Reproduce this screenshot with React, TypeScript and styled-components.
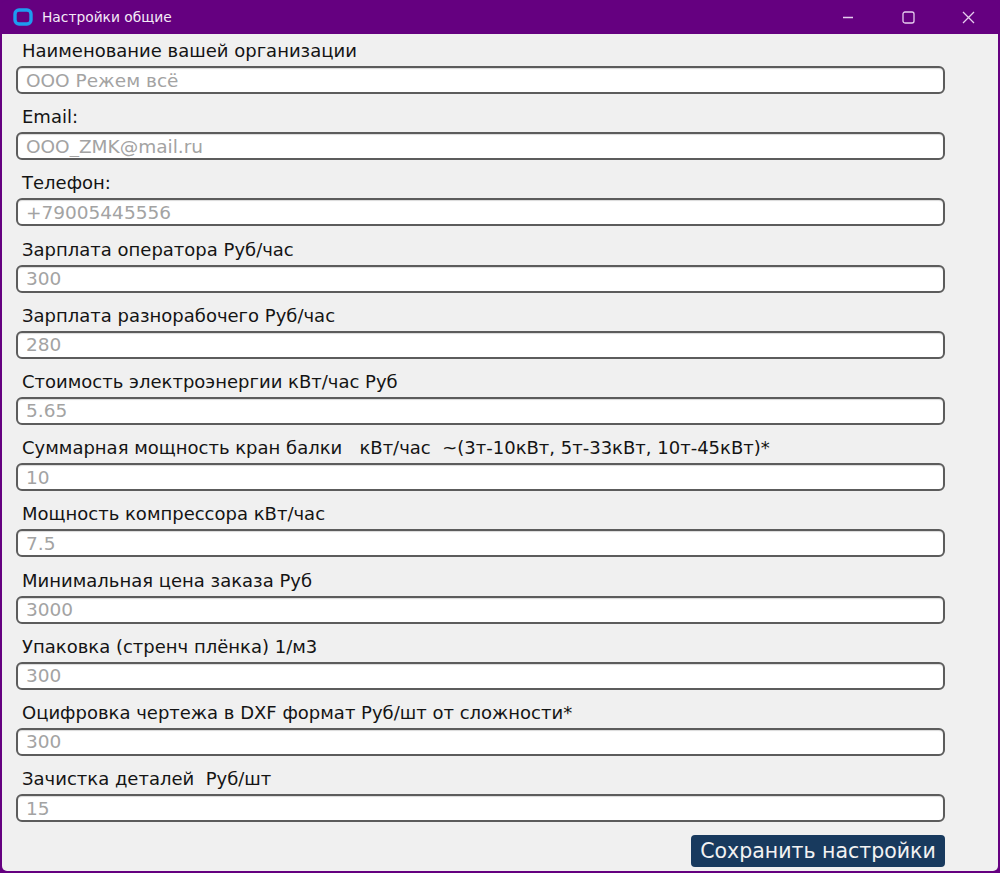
import styled, { createGlobalStyle } from 'styled-components';

const GlobalStyle = createGlobalStyle`
  html, body {
    margin: 0;
    padding: 0;
    background: #650080;
  }
  * {
    box-sizing: border-box;
  }
`;

const Window = styled.div`
  width: 1000px;
  height: 873px;
  display: flex;
  flex-direction: column;
  background: #650080;
  padding: 0 2px 2px 2px;
  border-radius: 8px 8px 6px 6px;
  overflow: hidden;
`;

const TitleBar = styled.div`
  height: 34px;
  flex: none;
  display: flex;
  align-items: center;
  padding-left: 11px;
  color: #f4eaf7;
  font-family: 'DejaVu Sans', 'Noto Sans', sans-serif;
  font-size: 13.8px;
`;

const Title = styled.span`
  margin-left: 9px;
`;

const Controls = styled.div`
  margin-left: auto;
  display: flex;
  height: 100%;
`;

const ControlButton = styled.div`
  width: 60px;
  height: 100%;
  display: flex;
  align-items: center;
  justify-content: center;
`;

const Body = styled.div`
  flex: 1;
  background: #f0f0f0;
  border-radius: 0 0 5px 5px;
  padding: 1px 53px 0 14px;
  display: flex;
  flex-direction: column;
  font-family: 'DejaVu Sans', 'Liberation Sans', sans-serif;
`;

const Field = styled.div`
  display: flex;
  flex-direction: column;
  margin-bottom: 7.2px;
`;

const Label = styled.label`
  height: 30px;
  line-height: 28px;
  padding: 2px 0 0 6px;
  margin-bottom: 1px;
  font-size: 18px;
  color: #141414;
  white-space: pre;
`;

const Input = styled.input`
  height: 28px;
  width: 100%;
  border: 2px solid #5c5c5c;
  border-radius: 6px;
  background: #fff;
  padding: 0 8px;
  font-family: 'DejaVu Sans', 'Liberation Sans', sans-serif;
  font-size: 18.5px;
  color: #222;
  outline: none;
  box-shadow: inset 0 1px 1px rgba(0, 0, 0, 0.15);

  &::placeholder {
    color: #a3a3a3;
  }
`;

const Footer = styled.div`
  display: flex;
  justify-content: flex-end;
  margin-top: 6px;
`;

const SaveButton = styled.button`
  width: 254px;
  height: 32px;
  border: none;
  border-radius: 4px;
  background: #183a5e;
  color: #f2f2f2;
  font-family: 'DejaVu Sans', 'Liberation Sans', sans-serif;
  font-size: 20.5px;
  cursor: pointer;
`;

const fields: { label: string; value: string }[] = [
  { label: 'Наименование вашей организации', value: 'ООО Режем всё' },
  { label: 'Email:', value: 'OOO_ZMK@mail.ru' },
  { label: 'Телефон:', value: '+79005445556' },
  { label: 'Зарплата оператора Руб/час', value: '300' },
  { label: 'Зарплата разнорабочего Руб/час', value: '280' },
  { label: 'Стоимость электроэнергии кВт/час Руб', value: '5.65' },
  {
    label: 'Суммарная мощность кран балки   кВт/час  ~(3т-10кВт, 5т-33кВт, 10т-45кВт)*',
    value: '10',
  },
  { label: 'Мощность компрессора кВт/час', value: '7.5' },
  { label: 'Минимальная цена заказа Руб', value: '3000' },
  { label: 'Упаковка (стренч плёнка) 1/м3', value: '300' },
  { label: 'Оцифровка чертежа в DXF формат Руб/шт от сложности*', value: '300' },
  { label: 'Зачистка деталей  Руб/шт', value: '15' },
];

function AppIcon() {
  return (
    <svg width="20" height="18" viewBox="0 0 20 18">
      <rect x="2" y="2" width="16" height="14" rx="4" fill="none" stroke="#1e9cf0" strokeWidth="3.4" />
    </svg>
  );
}

function WindowControls() {
  return (
    <Controls>
      <ControlButton>
        <svg width="12" height="12" viewBox="0 0 12 12">
          <line x1="1" y1="6.5" x2="11" y2="6.5" stroke="#e6cdee" strokeWidth="1.3" />
        </svg>
      </ControlButton>
      <ControlButton>
        <svg width="13" height="13" viewBox="0 0 13 13">
          <rect x="1" y="1" width="11" height="11" rx="2" fill="none" stroke="#e6cdee" strokeWidth="1.3" />
        </svg>
      </ControlButton>
      <ControlButton>
        <svg width="13" height="13" viewBox="0 0 13 13">
          <path d="M1 1 L12 12 M12 1 L1 12" stroke="#e6cdee" strokeWidth="1.3" />
        </svg>
      </ControlButton>
    </Controls>
  );
}

export default function App() {
  return (
    <>
      <GlobalStyle />
      <Window>
        <TitleBar>
          <AppIcon />
          <Title>Настройки общие</Title>
          <WindowControls />
        </TitleBar>
        <Body>
          {fields.map((f) => (
            <Field key={f.label}>
              <Label>{f.label}</Label>
              <Input placeholder={f.value} />
            </Field>
          ))}
          <Footer>
            <SaveButton>Сохранить настройки</SaveButton>
          </Footer>
        </Body>
      </Window>
    </>
  );
}
